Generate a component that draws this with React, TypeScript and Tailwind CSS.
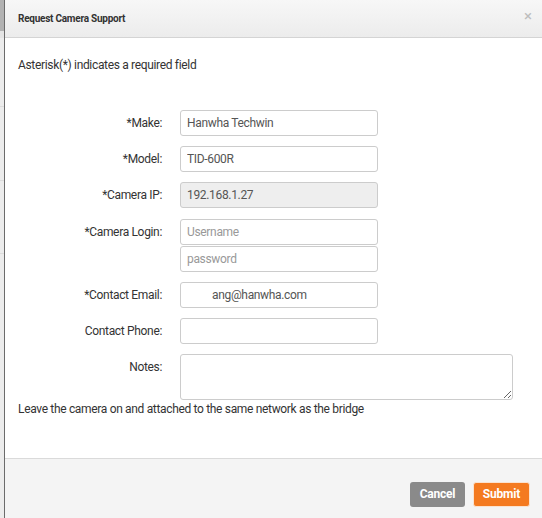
import React from "react";

const font = { fontFamily: "Roboto, 'Liberation Sans', sans-serif" };

function Row({ label, children }: { label: string; children: React.ReactNode }) {
  return (
    <div className="flex items-start">
      <div className="w-[144px] shrink-0 text-right text-[12px] tracking-[-0.33px] leading-[26px] text-[#333]">{label}</div>
      <div className="ml-[18px] flex flex-col gap-[1px]">{children}</div>
    </div>
  );
}

function Field({ value, placeholder, disabled, extra }: { value?: string; placeholder?: string; disabled?: boolean; extra?: string }) {
  return (
    <input
      readOnly
      value={value ?? ""}
      placeholder={placeholder}
      className={
        "h-[26px] w-[198px] rounded-[3px] border border-[#cccccc] px-[6px] text-[12px] tracking-[-0.33px] text-[#555] outline-none placeholder:text-[#999] " +
        (disabled ? "bg-[#eeeeee] " : "bg-white ") +
        (extra ?? "")
      }
      style={font}
    />
  );
}

export default function App() {
  return (
    <div className="flex h-[518px] w-[542px] overflow-hidden" style={font}>
      <div className="flex w-[4px] shrink-0 flex-col bg-[#ececec]">
        <div className="h-[31px] bg-[#b2b2b2]" />
        <div className="h-[7px] bg-[#e4e4e4]" />
        <div className="mt-[68px] h-px bg-[#dcdcdc]" />
        <div className="mt-[73px] h-px bg-[#dcdcdc]" />
        <div className="mt-[72px] h-px bg-[#dcdcdc]" />
      </div>
      <div className="flex flex-1 flex-col border-l border-[#6b6b6b] bg-white">
        <div className="flex h-[38px] items-center justify-between border-b border-[#d4d4d4] bg-gradient-to-b from-[#f7f7f7] to-[#ececec] pl-[13px] pr-[10px]">
          <span className="text-[10px] tracking-[-0.25px] font-bold text-[#333]">Request Camera Support</span>
          <span className="-mt-[4px] text-[15px] leading-none text-[#bdbdbd]">×</span>
        </div>
        <div className="flex flex-1 flex-col px-[13px] pt-[19px]">
          <div className="text-[12px] tracking-[-0.33px] leading-[16px] text-[#333]">Asterisk(*) indicates a required field</div>
          <div className="mt-[37px] flex flex-col gap-[10px]">
            <Row label="*Make:">
              <Field value="Hanwha Techwin" />
            </Row>
            <Row label="*Model:">
              <Field value="TID-600R" />
            </Row>
            <Row label="*Camera IP:">
              <Field value="192.168.1.27" disabled />
            </Row>
            <div className="mt-[1px]">
              <Row label="*Camera Login:">
                <Field placeholder="Username" />
                <Field placeholder="password" />
              </Row>
            </div>
            <Row label="*Contact Email:">
              <Field value="ang@hanwha.com" extra="pl-[31px]" />
            </Row>
            <Row label="Contact Phone:">
              <Field />
            </Row>
            <Row label="Notes:">
              <textarea
                readOnly
                className="h-[46px] w-[333px] resize rounded-[3px] border border-[#cccccc] bg-white px-[6px] text-[12px] outline-none"
                style={font}
              />
            </Row>
          </div>
          <div className="mt-[1px] text-[12px] tracking-[-0.33px] leading-[16px] text-[#333]">Leave the camera on and attached to the same network as the bridge</div>
        </div>
        <div className="flex h-[60px] items-center justify-end gap-[8px] border-t border-[#dadada] bg-[#f4f4f4] pr-[12px] pt-[11px]">
          <button className="h-[25px] w-[55px] rounded-[3px] bg-[#8a8a8a] text-[12px] font-bold tracking-[-0.2px] text-white" style={font}>Cancel</button>
          <button className="h-[25px] w-[57px] rounded-[3px] border border-[#fbe3d0] bg-[#f47a20] text-[12px] font-bold tracking-[-0.2px] text-white" style={font}>Submit</button>
        </div>
      </div>
    </div>
  );
}
